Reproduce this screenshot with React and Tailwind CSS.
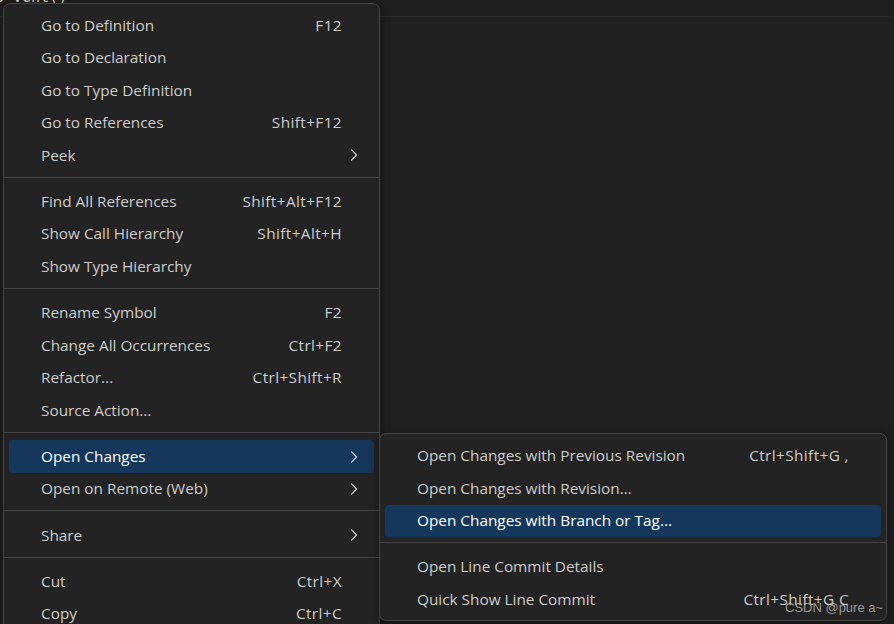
import React from "react";

const Chevron = () => (
  <svg width="8" height="12" viewBox="0 0 8 12" fill="none">
    <path d="M1.6 0.9 L6.6 6 L1.6 11.1" stroke="#cccccc" strokeWidth="1.3" strokeLinecap="round" strokeLinejoin="round" />
  </svg>
);

function Row({ label, shortcut, sub, active }) {
  return (
    <div className="h-[32.5px] px-[5px]">
      <div
        className={
          "h-full flex items-center pl-[32px] rounded-[4px] " +
          (active ? "bg-[#15375c] text-white" : "text-[#cccccc]")
        }
      >
        <span className="flex-1 whitespace-nowrap">{label}</span>
        {shortcut ? <span className="whitespace-nowrap tracking-[0.4px]">{shortcut}</span> : null}
        <div className="w-[32px] flex justify-end pr-[16px] items-center">{sub ? <Chevron /> : null}</div>
      </div>
    </div>
  );
}

const Sep = () => (
  <div className="h-[13.75px] pt-[5px]">
    <div className="h-px bg-[#454545]" />
  </div>
);

const mainGroups = [
  [
    { label: "Go to Definition", shortcut: "F12" },
    { label: "Go to Declaration" },
    { label: "Go to Type Definition" },
    { label: "Go to References", shortcut: "Shift+F12" },
    { label: "Peek", sub: true },
  ],
  [
    { label: "Find All References", shortcut: "Shift+Alt+F12" },
    { label: "Show Call Hierarchy", shortcut: "Shift+Alt+H" },
    { label: "Show Type Hierarchy" },
  ],
  [
    { label: "Rename Symbol", shortcut: "F2" },
    { label: "Change All Occurrences", shortcut: "Ctrl+F2" },
    { label: "Refactor...", shortcut: "Ctrl+Shift+R" },
    { label: "Source Action..." },
  ],
  [
    { label: "Open Changes", sub: true, active: true },
    { label: "Open on Remote (Web)", sub: true },
  ],
  [{ label: "Share", sub: true }],
  [
    { label: "Cut", shortcut: "Ctrl+X" },
    { label: "Copy", shortcut: "Ctrl+C" },
    { label: "Paste", shortcut: "Ctrl+V" },
  ],
];

const subGroups = [
  [
    { label: "Open Changes with Previous Revision", shortcut: "Ctrl+Shift+G ," },
    { label: "Open Changes with Revision..." },
    { label: "Open Changes with Branch or Tag...", active: true },
  ],
  [
    { label: "Open Line Commit Details" },
    { label: "Quick Show Line Commit", shortcut: "Ctrl+Shift+G C" },
  ],
];

function Groups({ groups }) {
  return groups.map((g, gi) => (
    <React.Fragment key={gi}>
      {gi > 0 ? <Sep /> : null}
      {g.map((it, i) => (
        <Row key={i} {...it} />
      ))}
    </React.Fragment>
  ));
}

export default function App() {
  return (
    <div
      className="relative w-[894px] h-[624px] overflow-hidden bg-[#1f1f1f] text-[15.35px]"
      style={{ fontFamily: "'Open Sans', 'Noto Sans', sans-serif" }}
    >
      <div className="h-[17px] border-b border-[#2a2a2a] bg-[#1e1e1e] overflow-hidden">
        <div
          className="mt-[-14px] ml-[-5px] text-[15px] leading-[22px] whitespace-nowrap"
          style={{ fontFamily: "'DejaVu Sans Mono', monospace" }}
        >
          <span className="text-[#dcdcaa]">o</span>
          <span className="text-[#d4d4d4]"> vent</span>
          <span className="text-[#dcdcaa]">()</span>
        </div>
      </div>

      <div className="absolute left-[3px] top-[3px] w-[377px] h-[640px] bg-[#232323] border border-[#454545] rounded-[7px] pt-[5px] shadow-[0_2px_8px_rgba(0,0,0,0.45)]">
        <Groups groups={mainGroups} />
      </div>

      <div className="absolute left-[379px] top-[433px] w-[508px] h-[188px] bg-[#232323] border border-[#454545] rounded-[7px] pt-[5.5px] shadow-[0_2px_8px_rgba(0,0,0,0.45)]">
        <Groups groups={subGroups} />
      </div>

      <div
        className="absolute left-[785px] top-[598px] text-[13px] text-[#b8b8b8] opacity-80 whitespace-nowrap"
        style={{ fontFamily: "'Liberation Sans', Arial, sans-serif" }}
      >
        CSDN @pure a~
      </div>
    </div>
  );
}
